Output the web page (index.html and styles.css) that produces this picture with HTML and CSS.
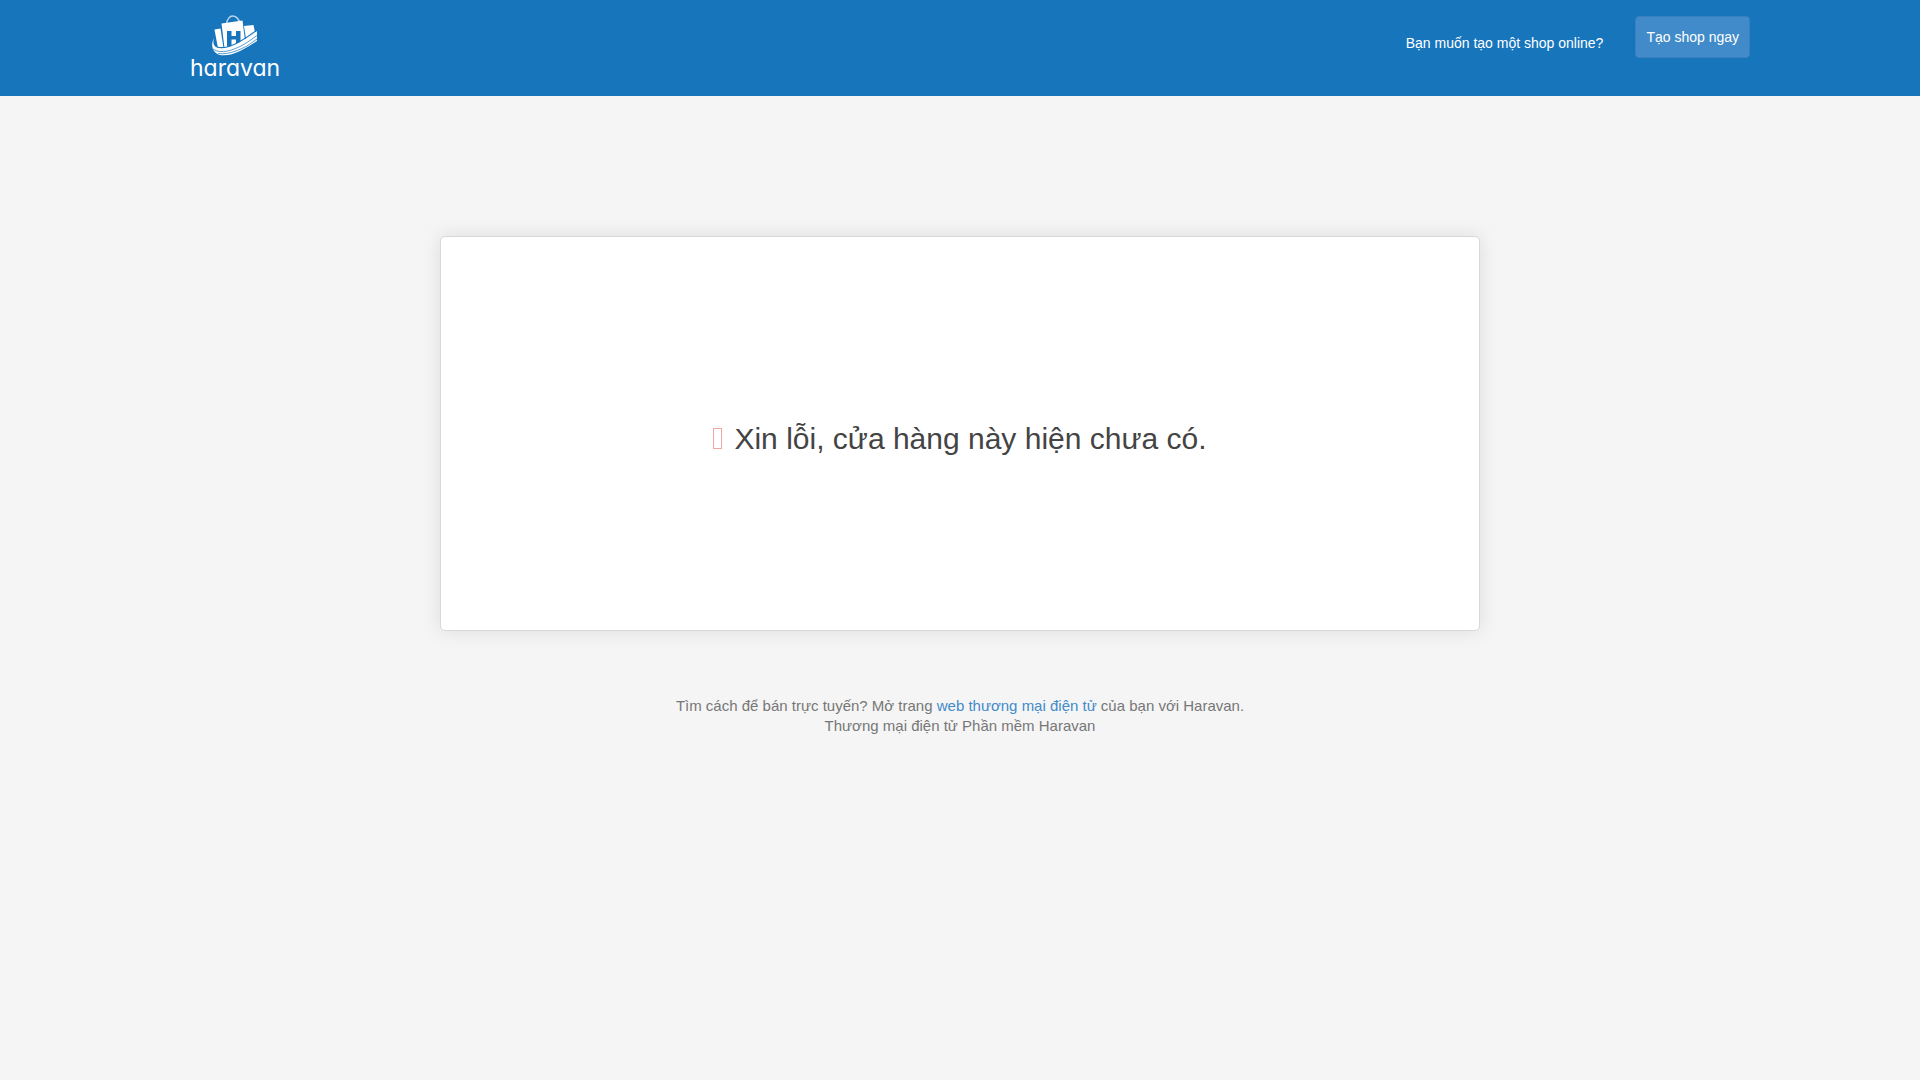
FILE: index.html
```
<!DOCTYPE html>
<html lang="vi">
<head>
<meta charset="utf-8">
<meta name="viewport" content="width=device-width, initial-scale=1">
<title>Haravan</title>
<link rel="stylesheet" href="styles.css">
</head>
<body>
<header class="header">
  <div class="header-inner">
    <a class="logo" href="#">
      <svg class="logo-mark" viewBox="0 0 46 42" aria-hidden="true">
        <path class="handle" d="M14.500 9C15 4 18 1 20.500 1S27 3 27.500 8"/>
        <path class="bag" d="M2.500 14.500L8.500 13.500 11.500 33 6 33.500z"/>
        <path class="bag" d="M9.500 8.500L30.500 5.500 33 25.500 22 31 12.500 33z"/>
        <path class="bag" d="M32 11L41.500 10 43 17.500 34 24z"/>
        <path class="letter" d="M15 16h4.500v5H24v-5h4.500v11.500L24 29v-4.500h-4.500V31L15 32z"/>
        <path class="swoosh" d="M2 23C-2 31 1 38 8 40 20 42 34 33 45 26V16C34 24 22 32 9 33 3 33 0 30 2 23z"/>
        <path class="gap" d="M3 30C5 34 11 33 17 31.500 27 28.500 36 21.500 45 15"/>
        <path class="stripe" d="M1 34C9 40 22 34.500 30 30.500 36 27 40 24 45 20.500"/>
        <path class="stripe" d="M6 38.500C17 40 28 34.500 35 31l10-7"/>
      </svg>
      <span class="logo-name">haravan</span>
    </a>
    <div class="signup">
      <span class="signup-text">Bạn muốn tạo một shop online?</span>
      <button class="signup-button" type="button">Tạo shop ngay</button>
    </div>
  </div>
</header>
<main class="main">
  <section class="card">
    <h1 class="message"><span class="message-icon" aria-hidden="true"></span>Xin lỗi, cửa hàng này hiện chưa có.</h1>
  </section>
  <p class="note">Tìm cách để bán trực tuyến? Mở trang <a href="#">web thương mại điện tử</a> của bạn với Haravan.<br>Thương mại điện tử Phần mềm Haravan</p>
</main>
</body>
</html>
```
FILE: styles.css
```
* {
  box-sizing: border-box;
}

body {
  margin: 0;
  min-height: 100vh;
  background: #f5f5f5;
  color: #444;
  font: 14px/20px "Liberation Sans", Helvetica, Arial, sans-serif;
}

.header {
  background: #1775bc;
}

.header-inner {
  display: flex;
  justify-content: space-between;
  align-items: flex-start;
  max-width: 1600px;
  min-height: 96px;
  margin: 0 auto;
  padding: 15px 10px 0 30px;
}

.logo {
  display: flex;
  flex-direction: column;
  align-items: center;
  color: #fff;
  text-decoration: none;
}

.logo-mark {
  width: 46px;
  height: 42px;
}

.handle {
  fill: none;
  stroke: #b9d6ec;
  stroke-width: 1.5;
}

.bag,
.swoosh {
  fill: #fff;
}

.letter {
  fill: #1775bc;
}

.gap,
.stripe {
  fill: none;
  stroke: #1775bc;
  stroke-width: 1.2;
}

.stripe {
  stroke-width: 0.7;
}

.logo-name {
  font: 23px/22px Inter, "Liberation Sans", sans-serif;
  font-feature-settings: "cv11";
}

.signup {
  display: flex;
  align-items: flex-start;
  gap: 32px;
  padding-top: 1px;
}

.signup-text {
  padding-top: 17px;
  color: #fff;
}

.signup-button {
  padding: 10px;
  border: 1px solid #3a80c0;
  border-radius: 4px;
  background: #428bca;
  color: #fff;
  font: inherit;
  cursor: pointer;
}

.main {
  padding: 140px 20px 40px;
}

.card {
  display: flex;
  align-items: center;
  justify-content: center;
  max-width: 1040px;
  min-height: 395px;
  margin: 0 auto;
  padding: 10px 20px 0;
  border: 1px solid #d8d8d8;
  border-radius: 5px;
  background: #fff;
  box-shadow: 0 0 20px rgba(0, 0, 0, 0.1);
}

.message {
  margin: 0;
  font-size: 30px;
  line-height: 36px;
  font-weight: 400;
}

.message-icon {
  display: inline-block;
  width: 9px;
  height: 21px;
  margin-right: 12px;
  border: 1px solid #f2a5a5;
}

.note {
  margin: 65px 0 0;
  color: #777;
  font-size: 15px;
  line-height: 20px;
  text-align: center;
}

.note a {
  color: #428bca;
  text-decoration: none;
}
```
